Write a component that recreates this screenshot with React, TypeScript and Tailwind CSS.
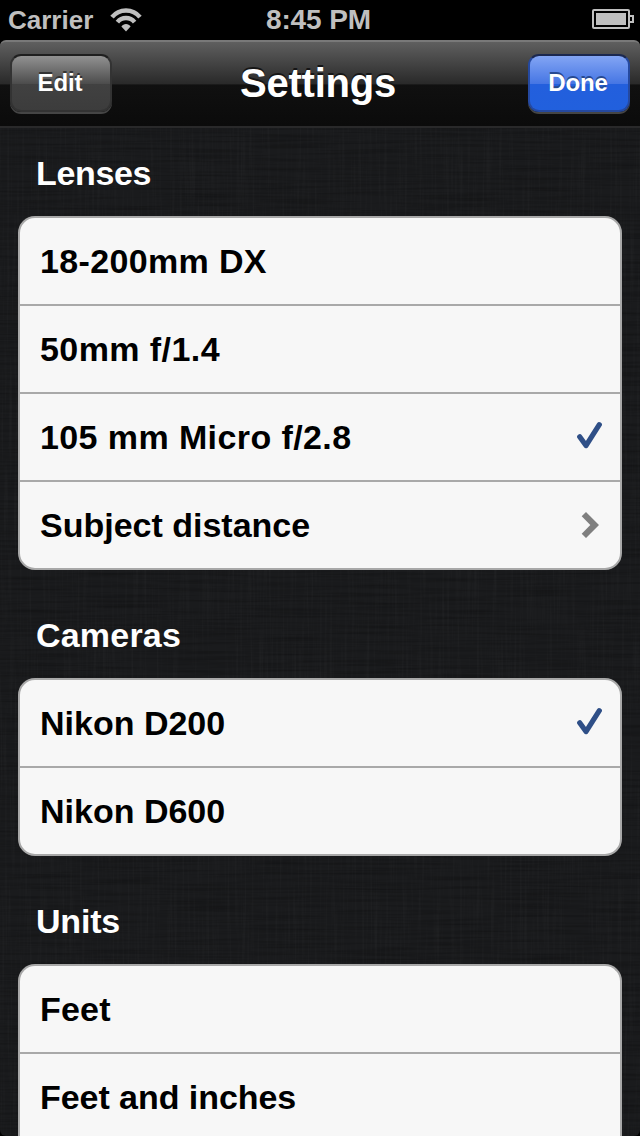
import type { ReactNode } from 'react';

type Accessory = 'check' | 'chevron';
type Item = { label: string; tracking?: string; accessory?: Accessory };
type Group = { title: string; tracking: string; items: Item[]; continues?: boolean };

const groups: Group[] = [
  {
    title: 'Lenses',
    tracking: 'tracking-[-0.35px]',
    items: [
      { label: '18-200mm DX', tracking: 'tracking-[0.35px]' },
      { label: '50mm f/1.4', tracking: 'tracking-[0.42px]' },
      { label: '105 mm Micro f/2.8', tracking: 'tracking-[0.4px]', accessory: 'check' },
      { label: 'Subject distance', accessory: 'chevron' },
    ],
  },
  {
    title: 'Cameras',
    tracking: 'tracking-[0.2px]',
    items: [{ label: 'Nikon D200', accessory: 'check' }, { label: 'Nikon D600' }],
  },
  {
    title: 'Units',
    tracking: 'tracking-[-0.2px]',
    items: [
      { label: 'Feet', tracking: 'tracking-[0.2px]' },
      { label: 'Feet and inches', tracking: 'tracking-[-0.05px]' },
    ],
    continues: true,
  },
];

function WifiIcon() {
  return (
    <svg className="ml-[17px] h-6 w-8" viewBox="0 0 32 24" fill="none" stroke="#bfbfbf" strokeWidth="4.4">
      <path d="M2 9.2a18 18 0 0 1 28 0" />
      <path d="M7.4 14.1a11 11 0 0 1 17.2 0" />
      <path d="M11.4 18.6a5.4 5.4 0 0 1 9.2 0L16 23.6z" fill="#bfbfbf" stroke="none" />
    </svg>
  );
}

function BatteryIcon() {
  return (
    <svg className="mt-[-2px] h-5 w-[42px]" viewBox="0 0 42 20" fill="none" stroke="#bfbfbf" strokeWidth="2">
      <rect x="1" y="1" width="36" height="18" rx="1" />
      <rect x="4" y="4" width="30" height="12" fill="#bfbfbf" stroke="none" />
      <path d="M38 7h3v6h-3" />
    </svg>
  );
}

function CheckIcon() {
  return (
    <svg className="mr-[18px] mb-1 h-7 w-[26px]" viewBox="0 0 26 28" fill="none" stroke="#2f4f87" strokeWidth="5.2" strokeLinecap="round" strokeLinejoin="round">
      <path d="M3.7 15.8 10 24.6 23.3 3.7" />
    </svg>
  );
}

function ChevronIcon() {
  return (
    <svg className="mr-[21px] h-[26px] w-[18px]" viewBox="0 0 18 26" fill="#7f7f7f">
      <path d="M5 0 18 13 5 26 .7 21.7 9.3 13 .7 4.3z" />
    </svg>
  );
}

function NavButton({ primary = false, children }: { primary?: boolean; children: ReactNode }) {
  const tone = primary
    ? 'border-[#2549a0] border-t-[#1b2850] bg-[linear-gradient(#83a5f4_0%,#4676e4_51%,#235fdd_52%,#2160dd_100%)] [text-shadow:0_-2px_0_#274a91]'
    : 'border-[#333] border-t-[#1f1f1f] bg-[linear-gradient(#929292_0%,#4d4d4d_51%,#414141_52%,#3c3c3c_100%)] [text-shadow:0_-2px_0_#333]';
  return (
    <button
      className={`h-[58px] w-[102px] rounded-[11px] border-2 pr-[2px] pb-px text-2xl leading-none font-bold tracking-[-0.1px] shadow-[0_2px_0_#454545] ${tone}`}
    >
      {children}
    </button>
  );
}

function SettingsGroup({ title, tracking, items, continues = false }: Group) {
  return (
    <section className="mb-[22px]">
      <h2 className={`flex h-[86px] items-center pl-[18px] text-[34px] leading-none font-bold text-white ${tracking}`}>
        {title}
      </h2>
      <ul
        className={`overflow-hidden border-2 border-[#a8a8a8] bg-[#f7f7f7] ${continues ? 'rounded-t-[17px] border-b-0' : 'rounded-[17px]'}`}
      >
        {items.map((item) => (
          <li
            key={item.label}
            className="flex h-[88px] items-center justify-between border-b-2 border-[#a9a9a9] pl-5 last:h-[86px] last:border-b-0"
          >
            <span className={`text-[34px] leading-none font-bold text-black ${item.tracking ?? ''}`}>{item.label}</span>
            {item.accessory === 'check' && <CheckIcon />}
            {item.accessory === 'chevron' && <ChevronIcon />}
          </li>
        ))}
      </ul>
    </section>
  );
}

function LinenTexture() {
  return (
    <svg className="absolute inset-0 h-full w-full" aria-hidden="true">
      <filter id="warp" x="0" y="0" width="100%" height="100%" colorInterpolationFilters="sRGB">
        <feTurbulence type="fractalNoise" baseFrequency="0.4 0.012" numOctaves="2" seed="4" />
        <feColorMatrix values="0 0 0 0 1  0 0 0 0 1  0 0 0 0 1  0.06 0 0 0 -0.029" />
      </filter>
      <filter id="weft" x="0" y="0" width="100%" height="100%" colorInterpolationFilters="sRGB">
        <feTurbulence type="fractalNoise" baseFrequency="0.012 0.4" numOctaves="2" seed="9" />
        <feColorMatrix values="0 0 0 0 0  0 0 0 0 0  0 0 0 0 0  0.5 0 0 0 -0.2" />
      </filter>
      <rect width="100%" height="100%" filter="url(#weft)" />
      <rect width="100%" height="100%" filter="url(#warp)" />
    </svg>
  );
}

export default function App() {
  return (
    <div className="flex h-[1136px] w-[640px] flex-col overflow-hidden bg-black font-['Liberation_Sans',Arial,sans-serif] antialiased">
      <header className="grid h-10 shrink-0 grid-cols-3 items-center pr-[6px] pl-2 font-bold text-[#bfbfbf]">
        <div className="flex items-center">
          <span className="text-[26px] leading-none">Carrier</span>
          <WifiIcon />
        </div>
        <span className="pr-[5px] text-center text-[28px] leading-none tracking-[-0.1px]">8:45 PM</span>
        <div className="flex justify-end">
          <BatteryIcon />
        </div>
      </header>
      <nav className="flex h-22 shrink-0 items-start justify-between rounded-t-[6px] border-t-2 border-b-2 border-t-[#797979] border-b-[#29292a] bg-[linear-gradient(#5f5f5f_0%,#292929_50%,#101010_51%,#0b0b0b_100%)] px-[10px] pt-3 text-white">
        <NavButton>Edit</NavButton>
        <h1 className="pt-[9px] pr-[4px] text-[40px] leading-none font-bold tracking-[-0.25px] [text-shadow:0_-2px_0_#161616]">Settings</h1>
        <NavButton primary>Done</NavButton>
      </nav>
      <main className="relative min-h-0 flex-1 overflow-hidden rounded-b-[6px] bg-[#1a1b1d]">
        <LinenTexture />
        <div className="relative px-[18px] pt-[2px]">
          {groups.map((group) => (
            <SettingsGroup key={group.title} {...group} />
          ))}
        </div>
      </main>
    </div>
  );
}
